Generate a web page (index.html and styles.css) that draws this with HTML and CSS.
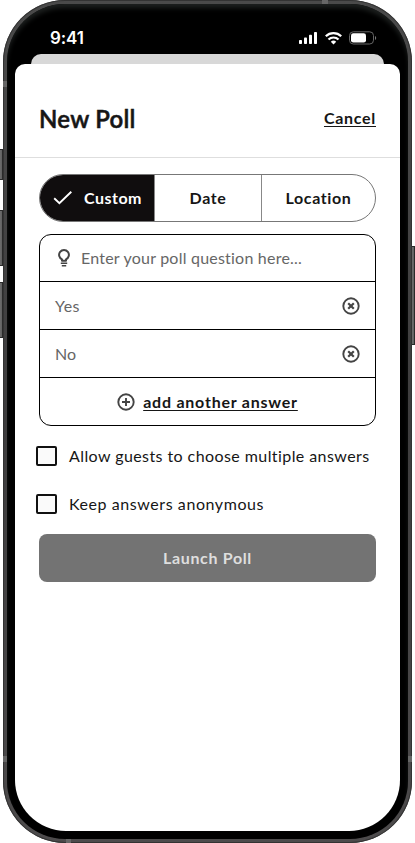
FILE: index.html
```html
<!DOCTYPE html>
<html lang="en">
<head>
<meta charset="utf-8">
<meta name="viewport" content="width=device-width, initial-scale=1">
<title>New Poll</title>
<link rel="stylesheet" href="styles.css">
</head>
<body>
<div class="device">
  <i class="key key-silent"></i><i class="key key-up"></i><i class="key key-down"></i><i class="key key-power"></i>
  <div class="phone">
    <i class="band band-top"></i><i class="band band-bottom"></i>
    <i class="band side left upper"></i><i class="band side left lower"></i><i class="band side right lower"></i>
    <div class="screen">
      <div class="status">
        <span class="time">9:41</span>
        <svg class="signals" width="78" height="14" viewBox="0 0 78 14" fill="#fff">
          <rect x="0" y="9" width="3" height="4" rx=".8"/><rect x="5" y="6.5" width="3" height="6.5" rx=".8"/><rect x="10" y="3.8" width="3" height="9.2" rx=".8"/><rect x="15" y="1" width="3" height="12" rx=".8"/>
          <g fill="none" stroke="#fff" stroke-width="2.2"><path d="M26.8 5.3a11 11 0 0 1 15.4 0"/><path d="M29.5 8.6a7 7 0 0 1 10 0"/></g>
          <path d="M31.8 10.8a4 4 0 0 1 5.4 0L34.5 13.4z"/>
          <rect x="50.5" y=".8" width="24" height="12.2" rx="3.8" fill="none" stroke="#666"/>
          <rect x="52" y="2.2" width="15" height="9.4" rx="2.3"/><path d="M76 5v4c1.6-.7 1.6-3.3 0-4z" fill="#777"/>
        </svg>
      </div>
      <div class="back-sheet"></div>
      <main class="sheet">
        <header class="header"><h1>New Poll</h1><a class="link cancel">Cancel</a></header>
        <div class="content">
          <nav class="tabs">
            <button class="tab active"><svg width="20" height="16" viewBox="0 0 20 16" fill="none" stroke="#fff" stroke-width="1.9"><path d="M1.2 8.3l5.2 5L18.3 1.8"/></svg><span class="custom">Custom</span></button>
            <button class="tab">Date</button>
            <button class="tab">Location</button>
          </nav>
          <section class="poll">
            <div class="row question">
              <svg width="14" height="18" viewBox="0 0 14 18" fill="none" stroke="#444" stroke-width="2"><path d="M5 11.8v-1.4A4.9 4.9 0 1 1 9 10.4v1.4z" stroke-linejoin="round"/><path d="M3.8 14.3h6.4M4.8 16.8h4.4" stroke-width="1.6"/></svg>
              <span>Enter your poll question here...</span>
            </div>
            <div class="row"><span class="yes">Yes</span><svg width="18" height="18" viewBox="0 0 18 18" fill="none" stroke="#444" stroke-width="1.9"><circle cx="9" cy="9" r="7.7"/><path d="M6.2 6.2l5.6 5.6m0-5.6l-5.6 5.6" stroke-width="2.2"/></svg></div>
            <div class="row"><span>No</span><svg width="18" height="18" viewBox="0 0 18 18" fill="none" stroke="#444" stroke-width="1.9"><circle cx="9" cy="9" r="7.7"/><path d="M6.2 6.2l5.6 5.6m0-5.6l-5.6 5.6" stroke-width="2.2"/></svg></div>
            <div class="row add"><svg width="18" height="18" viewBox="0 0 18 18" fill="none" stroke="#444" stroke-width="1.9"><circle cx="9" cy="9" r="7.7"/><path d="M9 5v8M5 9h8"/></svg><a class="link another">add another answer</a></div>
          </section>
          <label class="option"><i class="box"></i><span class="allow">Allow guests to choose multiple answers</span></label>
          <label class="option second"><i class="box"></i><span class="keep">Keep answers anonymous</span></label>
          <button class="launch">Launch Poll</button>
        </div>
      </main>
    </div>
  </div>
</div>
</body>
</html>
```
FILE: styles.css
```css
* { box-sizing: border-box; }
body { margin: 0; background: #fff; font: 16px/24px Lato, sans-serif; color: #161616; overflow: hidden; }
svg { display: block; flex: none; }
button { font: inherit; border: 0; padding: 0; margin: 0; background: none; color: inherit; }

.device { position: relative; width: 415px; height: 843px; padding: 0 3px; }
.phone {
  position: relative; width: 409px; height: 843px; padding: 4px;
  border-radius: 62px; background: linear-gradient(#4a4a4a, #3e3d3e 50%, #4d4b4c);
  box-shadow: inset 0 0 0 1px #333;
}
.screen {
  height: 835px; padding: 0 8px 8px; display: flex; flex-direction: column;
  border-radius: 58px; background: #000;
  box-shadow: inset 0 5px 5px -1px #1d201f;
}

.key { position: absolute; width: 4px; background: linear-gradient(90deg, #444, #888 45%, #444); border: 1px solid #2a2a2a; }
.key-silent { left: -1px; top: 149px; height: 31px; }
.key-up { left: -1px; top: 210px; height: 56px; }
.key-down { left: -1px; top: 282px; height: 56px; }
.key-power { left: 411px; top: 246px; height: 99px; }

.band { position: absolute; background: #666; }
.band-top { left: 319px; top: 0; width: 6px; height: 4px; }
.band-bottom { left: 63px; bottom: 0; width: 5px; height: 4px; }
.side { width: 4px; height: 6px; }
.left { left: 0; }
.right { right: 0; }
.upper { top: 81px; }
.lower { top: 756px; }

.status { height: 50px; padding: 24px 23px 0 35px; display: flex; justify-content: space-between; align-items: flex-start; }
.time { font: 600 17px/20px Inter, sans-serif; letter-spacing: -.1px; color: #fff; }
.signals { margin-top: 3px; }
.back-sheet { flex: none; height: 10px; margin: 0 16px; border-radius: 10px 10px 0 0; background: #d8d8d8; }

.sheet { flex: 1; background: #fff; border-radius: 10px 10px 51px 51px; }
.header { height: 94px; padding: 16px 24px 0; display: flex; justify-content: space-between; align-items: center; border-bottom: 1px solid #dedede; }
h1 { margin: 0; font-size: 24px; line-height: 30px; font-weight: 600; letter-spacing: .25px; -webkit-text-stroke: .5px #161616; }
.link { font-weight: 700; text-decoration: underline; text-decoration-thickness: 1px; text-underline-offset: 2px; }
.cancel { letter-spacing: .7px; margin-top: -2px; }

.content { padding: 16px 24px 0; }
.tabs { height: 48px; display: grid; grid-template-columns: 114px 107px 1fr; border: 1px solid #777; border-radius: 24px; overflow: hidden; }
.tab { display: flex; align-items: center; justify-content: center; gap: 11px; font-weight: 700; letter-spacing: .6px; border-left: 1px solid #888; }
.tab.active { margin: -1px 0 -1px -1px; background: #100d0e; color: #fff; border: 0; justify-content: flex-start; padding-left: 14px; }
.tab.active svg { margin-top: -1px; }
.custom { letter-spacing: .5px; }

.poll { margin-top: 12px; height: 192px; border: 1px solid #000; border-radius: 12px; display: grid; grid-template-rows: 47px 48px 48px 47px; color: #666; }
.row { display: flex; align-items: center; justify-content: space-between; padding: 0 15px; border-bottom: 1px solid #000; }
.question { justify-content: flex-start; gap: 10px; padding-left: 17px; letter-spacing: .22px; }
.yes { letter-spacing: .4px; }
.add { border: 0; justify-content: center; gap: 8px; color: #161616; }
.another { letter-spacing: .77px; padding-top: 1px; }

.option { display: flex; align-items: center; gap: 12px; margin: 18px 0 0 -3px; height: 24px; }
.second { margin-top: 24px; }
.box { width: 21px; height: 20px; background: #fafafa; border: 2px solid #111; border-radius: 2px; flex: none; }
.allow { letter-spacing: .42px; white-space: nowrap; }
.keep { letter-spacing: .57px; }
.launch { display: block; width: 100%; height: 48px; margin-top: 18px; border-radius: 8px; background: #737373; color: #dedede; font-weight: 700; letter-spacing: .66px; }
```
